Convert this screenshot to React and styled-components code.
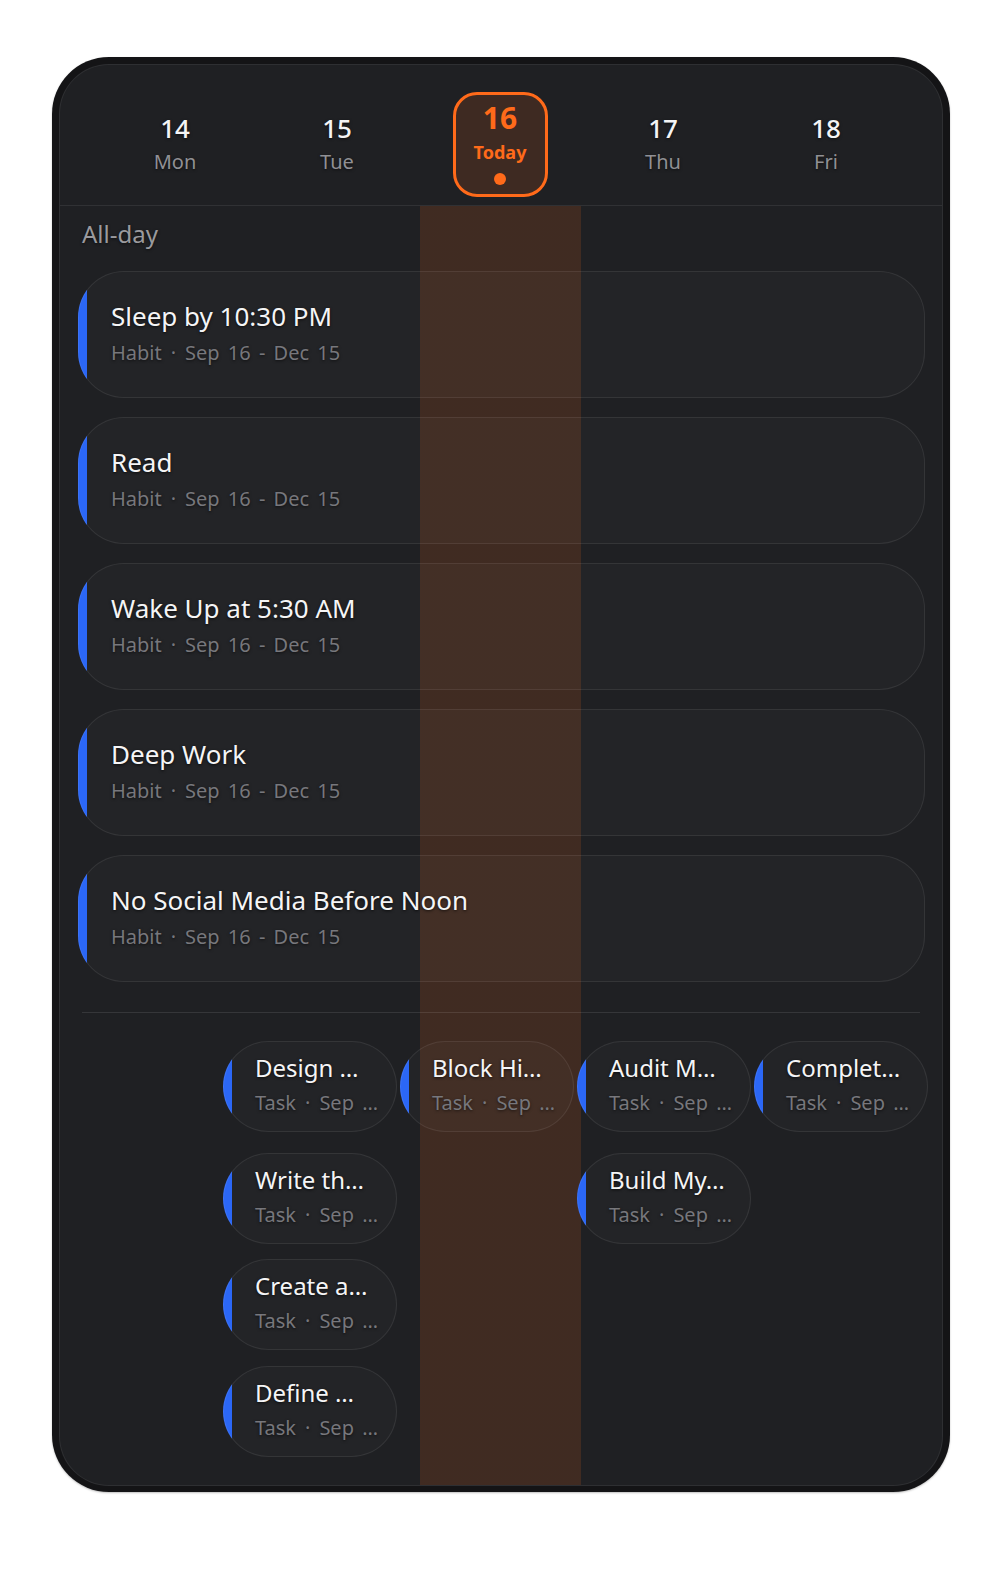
import React from "react";
import styled, { createGlobalStyle } from "styled-components";

const Global = createGlobalStyle`
  html, body { margin: 0; padding: 0; background: #ffffff; }
  body { font-family: "Noto Sans", "Open Sans", sans-serif; -webkit-font-smoothing: antialiased; }
`;

const ORANGE = "#ff6a1a";
const BLUE = "#2b67f6";

const Page = styled.div`
  padding: 57px 0 0 52px;
  width: 1001px;
  height: 1572px;
  box-sizing: border-box;
`;

const Frame = styled.div`
  width: 898px;
  height: 1435px;
  box-sizing: border-box;
  padding: 7px 7px 6px 7px;
  background: #141416;
  border-radius: 57px;
  display: flex;
  box-shadow: 0 1px 2px rgba(0, 0, 0, 0.25);
`;

const Panel = styled.div`
  flex: 1;
  display: flex;
  flex-direction: column;
  background: #1f2023;
  border: 1px solid rgba(255, 255, 255, 0.07);
  border-radius: 50px;
  overflow: hidden;
`;

const Header = styled.div`
  display: grid;
  grid-template-columns: 161px 163px 163px 163px 163px;
  justify-content: center;
  padding: 27px 0 8px 0;
  border-bottom: 1px solid rgba(255, 255, 255, 0.08);
`;

const Day = styled.div`
  justify-self: center;
  width: 95px;
  height: 105px;
  box-sizing: border-box;
  display: flex;
  flex-direction: column;
  align-items: center;
  padding-top: 20px;
`;

const TodayBox = styled.div`
  justify-self: center;
  width: 95px;
  height: 105px;
  box-sizing: border-box;
  display: flex;
  flex-direction: column;
  align-items: center;
  padding-top: 5px;
  border: 3px solid ${ORANGE};
  border-radius: 24px;
  background: rgba(255, 106, 26, 0.14);
`;

const DayNum = styled.div`
  font-size: 26px;
  line-height: 32px;
  font-weight: 500;
  color: #f4f4f5;
  text-shadow: 0 1px 3px rgba(0, 0, 0, 0.6);
`;

const DayName = styled.div`
  margin-top: 5px;
  font-size: 20px;
  line-height: 26px;
  color: #909094;
  text-shadow: 0 1px 3px rgba(0, 0, 0, 0.6);
`;

const TodayNum = styled.div`
  font-size: 30px;
  line-height: 36px;
  font-weight: 700;
  color: ${ORANGE};
`;

const TodayLabel = styled.div`
  margin-top: 4px;
  font-size: 18px;
  line-height: 24px;
  font-weight: 700;
  color: ${ORANGE};
`;

const Dot = styled.div`
  margin-top: 9px;
  width: 12px;
  height: 12px;
  border-radius: 50%;
  background: ${ORANGE};
`;

const Body = styled.div`
  flex: 1;
  padding: 13px 17px 0 18px;
  background-image: linear-gradient(
    to right,
    transparent 360px,
    rgba(255, 106, 26, 0.15) 360px,
    rgba(255, 106, 26, 0.15) 521px,
    transparent 521px
  );
`;

const AllDay = styled.div`
  margin-left: 4px;
  font-size: 24px;
  line-height: 30px;
  color: #9a9a9e;
  text-shadow: 0 1px 3px rgba(0, 0, 0, 0.6);
`;

const HabitList = styled.div`
  margin-top: 22px;
  display: flex;
  flex-direction: column;
  gap: 19px;
`;

const Card = styled.div`
  box-sizing: border-box;
  height: ${(p) => (p.$small ? 91 : 127)}px;
  border: 1px solid rgba(255, 255, 255, 0.08);
  border-radius: 46px;
  background-color: rgba(255, 255, 255, 0.018);
  background-image: linear-gradient(to right, ${BLUE} 9px, transparent 9px);
  background-origin: border-box;
  background-clip: border-box;
  display: flex;
  flex-direction: column;
  justify-content: center;
  padding-left: ${(p) => (p.$small ? 31 : 32)}px;
  gap: ${(p) => (p.$small ? 7 : 8)}px;
  overflow: hidden;
`;

const Title = styled.div`
  font-size: ${(p) => (p.$small ? 24 : 26)}px;
  line-height: ${(p) => (p.$small ? 30 : 32)}px;
  color: #f5f5f6;
  white-space: nowrap;
  text-shadow: 0 1px 3px rgba(0, 0, 0, 0.7);
  margin-top: -4px;
`;

const Sub = styled.div`
  font-size: 20px;
  line-height: 26px;
  color: #77777c;
  white-space: nowrap;
  word-spacing: 3px;
  text-shadow: 0 1px 3px rgba(0, 0, 0, 0.6);
`;

const Sep = styled.span`
  margin: 0 9px;
`;

const Divider = styled.div`
  margin: 30px 5px 0 4px;
  height: 1px;
  background: rgba(255, 255, 255, 0.1);
`;

const TaskGrid = styled.div`
  margin: 28px 0 0 145px;
  display: grid;
  grid-template-columns: repeat(4, 174px);
  grid-template-rows: 112px 106px 107px 91px;
  column-gap: 3px;
  align-items: start;
`;

const TaskCell = styled.div`
  grid-column: ${(p) => p.$col};
  grid-row: ${(p) => p.$row};
`;

const habits = [
  "Sleep by 10:30 PM",
  "Read",
  "Wake Up at 5:30 AM",
  "Deep Work",
  "No Social Media Before Noon",
];

const tasks = [
  { t: "Design …", col: 1, row: 1 },
  { t: "Block Hi…", col: 2, row: 1 },
  { t: "Audit M…", col: 3, row: 1 },
  { t: "Complet…", col: 4, row: 1 },
  { t: "Write th…", col: 1, row: 2 },
  { t: "Build My…", col: 3, row: 2 },
  { t: "Create a…", col: 1, row: 3 },
  { t: "Define …", col: 1, row: 4 },
];

const days = [
  { n: "14", d: "Mon" },
  { n: "15", d: "Tue" },
  { n: "16", today: true },
  { n: "17", d: "Thu" },
  { n: "18", d: "Fri" },
];

export default function App() {
  return (
    <Page>
      <Global />
      <Frame>
        <Panel>
          <Header>
            {days.map((day) =>
              day.today ? (
                <TodayBox key={day.n}>
                  <TodayNum>{day.n}</TodayNum>
                  <TodayLabel>Today</TodayLabel>
                  <Dot />
                </TodayBox>
              ) : (
                <Day key={day.n}>
                  <DayNum>{day.n}</DayNum>
                  <DayName>{day.d}</DayName>
                </Day>
              )
            )}
          </Header>
          <Body>
            <AllDay>All-day</AllDay>
            <HabitList>
              {habits.map((h) => (
                <Card key={h}>
                  <Title>{h}</Title>
                  <Sub>
                    Habit<Sep>·</Sep>Sep 16 - Dec 15
                  </Sub>
                </Card>
              ))}
            </HabitList>
            <Divider />
            <TaskGrid>
              {tasks.map((task) => (
                <TaskCell key={task.t} $col={task.col} $row={task.row}>
                  <Card $small>
                    <Title $small>{task.t}</Title>
                    <Sub>
                      Task<Sep>·</Sep>Sep …
                    </Sub>
                  </Card>
                </TaskCell>
              ))}
            </TaskGrid>
          </Body>
        </Panel>
      </Frame>
    </Page>
  );
}
